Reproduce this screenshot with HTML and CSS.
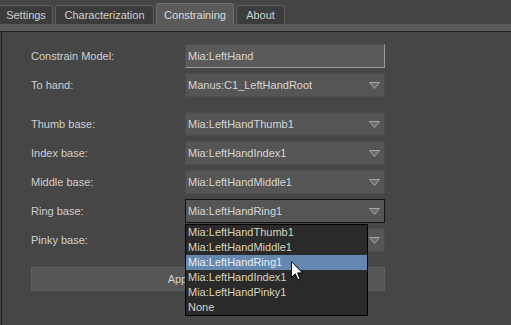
FILE: index.html
```html
<!DOCTYPE html>
<html lang="en">
<head>
  <meta charset="UTF-8">
  <title>Constraining</title>
  <link rel="stylesheet" href="styles.css">
</head>
<body>

  <div class="tabs">
    <div class="tab tab-settings">Settings</div>
    <div class="tab tab-char">Characterization</div>
    <div class="tab tab-constrain active">Constraining</div>
    <div class="tab tab-about">About</div>
  </div>
  <div class="tab-strip"></div>

  <div class="panel">
    <div class="form">
      <div class="row">
        <span class="label">Constrain Model:</span>
        <div class="field input">Mia:LeftHand</div>
      </div>
      <div class="row">
        <span class="label">To hand:</span>
        <div class="field select">Manus:C1_LeftHandRoot
          <svg class="arrow" viewBox="0 0 11 7"><polygon points="0.5,0.5 10.5,0.5 5.5,6.5"/></svg>
        </div>
      </div>

      <div class="row spaced">
        <span class="label">Thumb base:</span>
        <div class="field select">Mia:LeftHandThumb1
          <svg class="arrow" viewBox="0 0 11 7"><polygon points="0.5,0.5 10.5,0.5 5.5,6.5"/></svg>
        </div>
      </div>
      <div class="row">
        <span class="label">Index base:</span>
        <div class="field select">Mia:LeftHandIndex1
          <svg class="arrow" viewBox="0 0 11 7"><polygon points="0.5,0.5 10.5,0.5 5.5,6.5"/></svg>
        </div>
      </div>
      <div class="row">
        <span class="label">Middle base:</span>
        <div class="field select">Mia:LeftHandMiddle1
          <svg class="arrow" viewBox="0 0 11 7"><polygon points="0.5,0.5 10.5,0.5 5.5,6.5"/></svg>
        </div>
      </div>
      <div class="row">
        <span class="label">Ring base:</span>
        <div class="field select focused">Mia:LeftHandRing1
          <svg class="arrow" viewBox="0 0 11 7"><polygon points="0.5,0.5 10.5,0.5 5.5,6.5"/></svg>
        </div>
      </div>
      <div class="row">
        <span class="label">Pinky base:</span>
        <div class="field select">Mia:LeftHandPinky1
          <svg class="arrow" viewBox="0 0 11 7"><polygon points="0.5,0.5 10.5,0.5 5.5,6.5"/></svg>
        </div>
      </div>

      <button class="apply">Apply Constraint</button>
    </div>

    <!-- open list of the Ring base dropdown -->
    <ul class="popup">
      <li>Mia:LeftHandThumb1</li>
      <li>Mia:LeftHandMiddle1</li>
      <li class="hover">Mia:LeftHandRing1</li>
      <li>Mia:LeftHandIndex1</li>
      <li>Mia:LeftHandPinky1</li>
      <li>None</li>
    </ul>

    <svg class="cursor" viewBox="0 0 12 20"><path d="M0.5 0.5 L0.5 16.5 L4.2 12.8 L6.8 18.8 L9.2 17.8 L6.6 11.9 L11.5 11.9 Z"/></svg>
  </div>

</body>
</html>
```

FILE: styles.css
```css
body {
  margin: 0;
  background-color: #454545;
  font-family: 'Liberation Sans', Arial, sans-serif;
  font-size: 11px;
  color: #cfcfcf;
  height: 325px;
  overflow: hidden;
}

/* Tabs */
.tabs {
  display: flex;
  align-items: flex-end;
  gap: 2px;
  height: 24px;
  margin-left: -1px;
}

.tab {
  box-sizing: border-box;
  height: 19px;
  line-height: 18px;
  text-align: center;
  background-color: #3c3c3c;
  border: 1px solid #5c5c5c;
  border-bottom: none;
  border-radius: 3px 3px 0 0;
  color: #cfcfcf;
}

.tab-settings { width: 54px; }
.tab-char { width: 99px; }
.tab-constrain { width: 78px; }
.tab-about { width: 49px; }

.tab.active {
  height: 21px;
  line-height: 22px;
  background-color: #5a5a5a;
  border-color: #6e6e6e;
  color: #dcdcdc;
}

.tab-strip {
  height: 7px;
  background-color: #5a5a5a;
  border-bottom: 1px solid #1e1e1e;
}

/* Panel */
.panel {
  position: relative;
  margin-left: 1px;
  border-left: 1px solid #1e1e1e;
  background-color: #464646;
  height: 293px;
}

.form {
  display: flex;
  flex-direction: column;
  gap: 5px;
  padding: 12px 0 0 29px;
}

.row {
  display: flex;
  align-items: center;
  height: 24px;
}

.row.spaced {
  margin-top: 10px;
}

.label {
  width: 154px;
  color: #cfcfcf;
}

.field {
  box-sizing: border-box;
  width: 200px;
  height: 24px;
  padding: 0 4px 0 2px;
  display: flex;
  align-items: center;
  justify-content: space-between;
  color: #d6d6d6;
}

.input {
  background-color: #5a5a5a;
  border: 1px solid #4c4c4c;
  border-right-color: #9a9a9a;
  border-bottom-color: #9a9a9a;
}

.select {
  background-color: #555555;
  border: 1px solid #4d4d4d;
}

.select.focused {
  border-color: #141414;
}

.arrow {
  width: 11px;
  height: 7px;
  fill: #6c6c6c;
  stroke: #a6a6a6;
  stroke-width: 1;
}

.apply {
  margin-top: 10px;
  width: 354px;
  height: 24px;
  background-color: #565656;
  border: 1px solid #5e5e5e;
  font-family: inherit;
  font-size: 11px;
  color: #cfcfcf;
}

/* Dropdown list */
.popup {
  position: absolute;
  left: 183px;
  top: 192px;
  width: 181px;
  margin: 0;
  padding: 0;
  list-style: none;
  background-color: #2a2a2a;
  border: 1px solid #000000;
}

.popup li {
  height: 15px;
  line-height: 15px;
  padding-left: 2px;
  color: #dad4bc;
}

.popup li.hover {
  background-color: #6588b1;
  color: #ececec;
}

.cursor {
  position: absolute;
  left: 289px;
  top: 229px;
  width: 12px;
  height: 20px;
  fill: #ffffff;
  stroke: #000000;
  stroke-width: 1;
}
```
